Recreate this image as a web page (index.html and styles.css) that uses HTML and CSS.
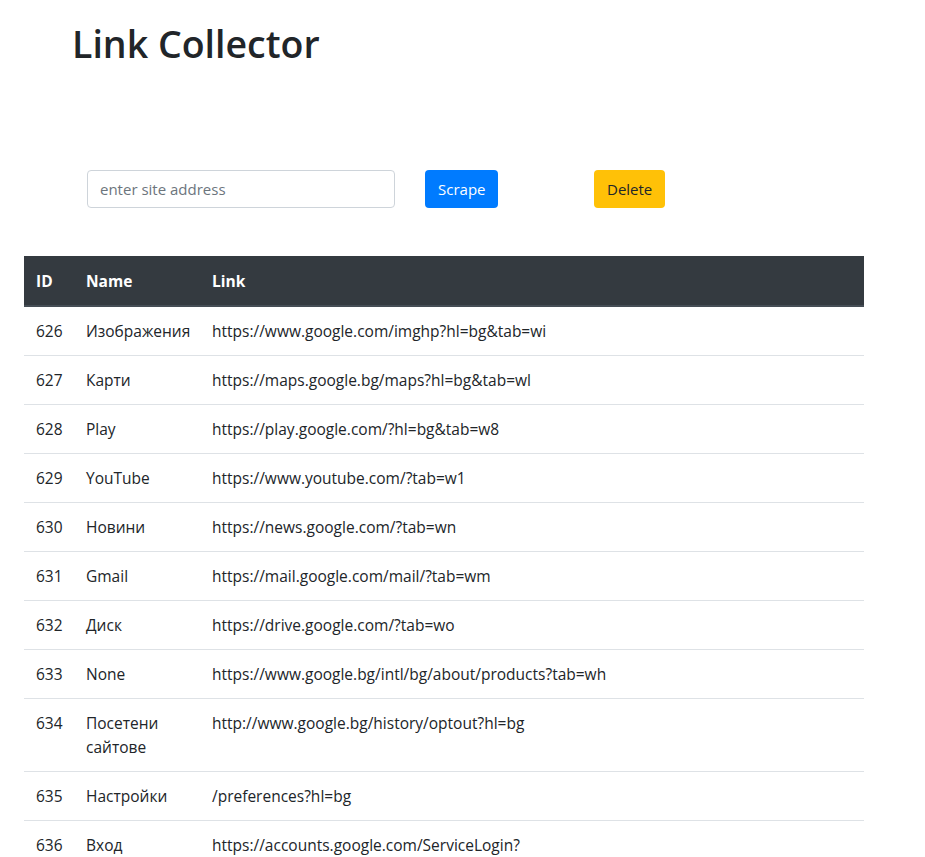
FILE: index.html
```html
<!DOCTYPE html>
<html lang="bg">
<head>
<meta charset="utf-8">
<title>Link Collector</title>
<link rel="stylesheet" href="styles.css">
</head>
<body>
<header class="title-wrap">
  <h1 class="title">Link Collector</h1>
</header>
<form class="scrape-form">
  <input class="site-input" type="text" placeholder="enter site address">
  <button class="btn btn-primary" type="button">Scrape</button>
  <button class="btn btn-warning" type="button">Delete</button>
</form>
<table class="links">
  <colgroup><col class="col-id"><col class="col-name"><col></colgroup>
  <thead>
    <tr><th>ID</th><th>Name</th><th>Link</th></tr>
  </thead>
  <tbody>
    <tr><td>626</td><td>Изображения</td><td>https://www.google.com/imghp?hl=bg&amp;tab=wi</td></tr>
    <tr><td>627</td><td>Карти</td><td>https://maps.google.bg/maps?hl=bg&amp;tab=wl</td></tr>
    <tr><td>628</td><td>Play</td><td>https://play.google.com/?hl=bg&amp;tab=w8</td></tr>
    <tr><td>629</td><td>YouTube</td><td>https://www.youtube.com/?tab=w1</td></tr>
    <tr><td>630</td><td>Новини</td><td>https://news.google.com/?tab=wn</td></tr>
    <tr><td>631</td><td>Gmail</td><td>https://mail.google.com/mail/?tab=wm</td></tr>
    <tr><td>632</td><td>Диск</td><td>https://drive.google.com/?tab=wo</td></tr>
    <tr><td>633</td><td>None</td><td>https://www.google.bg/intl/bg/about/products?tab=wh</td></tr>
    <tr><td>634</td><td>Посетени сайтове</td><td>http://www.google.bg/history/optout?hl=bg</td></tr>
    <tr><td>635</td><td>Настройки</td><td>/preferences?hl=bg</td></tr>
    <tr><td>636</td><td>Вход</td><td>https://accounts.google.com/ServiceLogin?</td></tr>
  </tbody>
</table>
</body>
</html>
```
FILE: styles.css
```css
* { box-sizing: border-box; }
html, body { margin: 0; }
body {
  font-family: "Open Sans", "Noto Sans", sans-serif;
  font-size: 15px;
  line-height: 24px;
  color: #212529;
  background: #fff;
  padding: 0 0 40px 24px;
}
.title-wrap { padding: 20px 0 0 48px; }
.title {
  margin: 0;
  font-size: 37.5px;
  font-weight: 600;
  line-height: 48px;
}
.scrape-form {
  display: flex;
  align-items: center;
  margin: 102px 0 48px 63px;
}
.site-input {
  width: 308px;
  height: 38px;
  padding: 6px 12px;
  font: inherit;
  font-size: 15px;
  color: #495057;
  border: 1px solid #ced4da;
  border-radius: 4px;
  outline: none;
}
.site-input::placeholder { color: #6c757d; }
.btn {
  height: 38px;
  padding: 6px 12px;
  font: inherit;
  font-size: 15px;
  border: 1px solid transparent;
  border-radius: 4px;
}
.btn-primary { background: #007bff; color: #fff; margin-left: 30px; width: 73px; }
.btn-warning { background: #ffc107; color: #212529; margin-left: 96px; width: 71px; }
.links {
  width: 840px;
  border-collapse: collapse;
  table-layout: fixed;
}
.col-id { width: 50px; }
.col-name { width: 126px; }
.links th, .links td {
  text-align: left;
  vertical-align: top;
  padding: 12px;
}
.links td { font-size: 15.5px; }
.links th {
  background: #343a40;
  color: #fff;
  font-weight: 700;
  font-size: 15.5px;
  padding-top: 13px;
  border-bottom: 2px solid #454d55;
}
.links td { border-top: 1px solid #dee2e6; }
.links tbody tr:first-child td { border-top: none; }
```
